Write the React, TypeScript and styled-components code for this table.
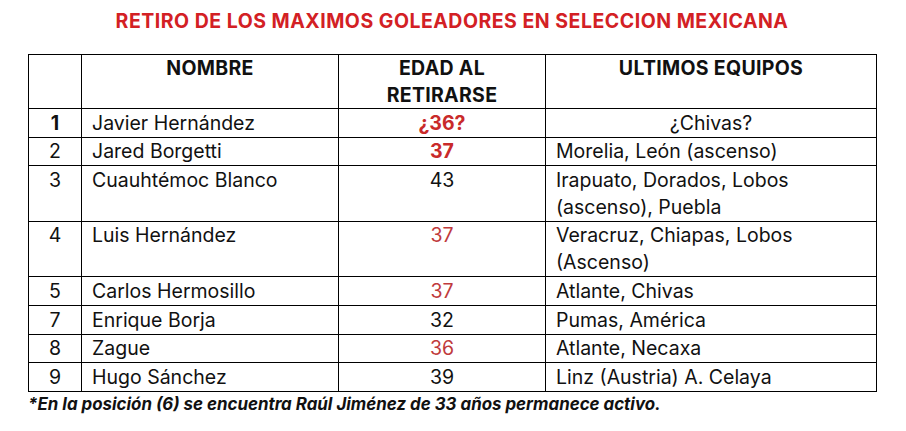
import styled, { createGlobalStyle } from "styled-components";

const Global = createGlobalStyle`
  html, body {
    margin: 0;
    padding: 0;
    background: #ffffff;
  }
  body {
    font-family: Inter, "Open Sans", sans-serif;
    color: #111;
  }
`;

const Page = styled.div`
  width: 906px;
  height: 431px;
  box-sizing: border-box;
  padding: 8px 0 0 28px;
`;

const Title = styled.h1`
  margin: 0 0 20px;
  width: 848px;
  text-align: center;
  font-size: 19.5px;
  line-height: 26px;
  letter-spacing: 0.5px;
  font-weight: 700;
  color: #d32024;
`;

const Table = styled.table`
  border-collapse: collapse;
  width: 848px;
  table-layout: fixed;
  font-size: 19.5px;
  line-height: 27px;
`;

const Th = styled.th`
  border: 1.5px solid #000;
  padding: 0 10px;
  line-height: 26.5px;
  vertical-align: top;
  font-weight: 700;
  letter-spacing: 0.3px;
  text-align: center;
`;

const Td = styled.td<{ $align?: "left" | "center"; $bold?: boolean }>`
  border: 1.5px solid #000;
  padding: 0.6px 10px 0;
  vertical-align: top;
  text-align: ${(p) => p.$align ?? "left"};
  font-weight: ${(p) => (p.$bold ? 700 : 400)};
`;

const Age = styled(Td)<{ $tone: "strong" | "soft" | "plain" }>`
  text-align: center;
  color: ${(p) => (p.$tone === "plain" ? "#111" : p.$tone === "strong" ? "#c92a2a" : "#c03a3c")};
  font-weight: ${(p) => (p.$tone === "strong" ? 700 : 400)};
`;

const Note = styled.p`
  margin: 1px 0 0;
  font-size: 16.9px;
  line-height: 22px;
  font-weight: 700;
  font-style: italic;
`;

type Row = {
  pos: string;
  name: string;
  age: string;
  tone: "strong" | "soft" | "plain";
  teams: string;
  center?: boolean;
  boldPos?: boolean;
};

const rows: Row[] = [
  { pos: "1", name: "Javier Hernández", age: "¿36?", tone: "strong", teams: "¿Chivas?", center: true, boldPos: true },
  { pos: "2", name: "Jared Borgetti", age: "37", tone: "strong", teams: "Morelia, León (ascenso)" },
  { pos: "3", name: "Cuauhtémoc Blanco", age: "43", tone: "plain", teams: "Irapuato, Dorados, Lobos (ascenso), Puebla" },
  { pos: "4", name: "Luis Hernández", age: "37", tone: "soft", teams: "Veracruz, Chiapas, Lobos (Ascenso)" },
  { pos: "5", name: "Carlos Hermosillo", age: "37", tone: "soft", teams: "Atlante, Chivas" },
  { pos: "7", name: "Enrique Borja", age: "32", tone: "plain", teams: "Pumas, América" },
  { pos: "8", name: "Zague", age: "36", tone: "soft", teams: "Atlante, Necaxa" },
  { pos: "9", name: "Hugo Sánchez", age: "39", tone: "plain", teams: "Linz (Austria) A. Celaya" },
];

export default function App() {
  return (
    <Page>
      <Global />
      <Title>RETIRO DE LOS MAXIMOS GOLEADORES EN SELECCION MEXICANA</Title>
      <Table>
        <colgroup>
          <col style={{ width: 53 }} />
          <col style={{ width: 257 }} />
          <col style={{ width: 207 }} />
          <col style={{ width: 331 }} />
        </colgroup>
        <thead>
          <tr>
            <Th />
            <Th>NOMBRE</Th>
            <Th>
              EDAD AL
              <br />
              RETIRARSE
            </Th>
            <Th>ULTIMOS EQUIPOS</Th>
          </tr>
        </thead>
        <tbody>
          {rows.map((r) => (
            <tr key={r.pos}>
              <Td $align="center" $bold={r.boldPos}>
                {r.pos}
              </Td>
              <Td>{r.name}</Td>
              <Age $tone={r.tone}>{r.age}</Age>
              <Td $align={r.center ? "center" : "left"}>{r.teams}</Td>
            </tr>
          ))}
        </tbody>
      </Table>
      <Note>*En la posición (6) se encuentra Raúl Jiménez de 33 años permanece activo.</Note>
    </Page>
  );
}
